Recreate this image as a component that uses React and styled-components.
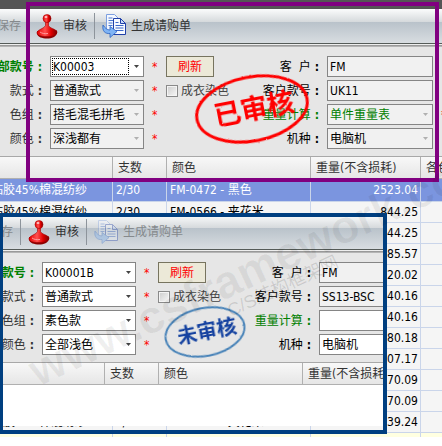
import React, { useId } from "react"
import styled, { createGlobalStyle } from 'styled-components';

const GlobalStyle = createGlobalStyle`
  body {
    margin: 0;
    background-color: #fff;
    font-family: "DejaVu Sans Condensed", "Noto Sans CJK SC", sans-serif;
    font-size: 12px;
    line-height: 20px;
    color: #000;
  }
`;

const Desktop = styled.main`
  position: relative;
  overflow: hidden;
  min-height: 446px;
  box-sizing: border-box;
`;

const TitleStrip = styled.div`
  height: 9px;
  background-color: #555;
`;

const Highlight = styled.div`
  position: absolute;
  top: 2px;
  left: 26px;
  width: 405px;
  height: 172px;
  border: 4px solid #800080;
  pointer-events: none;
`;

const FloatingWindow = styled.section`
  position: absolute;
  top: 213px;
  left: 0;
  width: 380px;
  padding-bottom: 4px;
  overflow: hidden;
  border: 4px solid #003f80;
  border-left-width: 3px;
`;

const Screen = styled.div`
  margin-left: ${props => props.$left}px;
  margin-top: ${props => props.$top || 0}px;
  min-width: 467px;
`;

const Toolbar = styled.div`
  display: flex;
  align-items: center;
  height: 34px;
  padding-left: 9px;
  background: linear-gradient(#fbfcfc 0, #d5d9dc 13px, #b9c2ca 13px, #d8dde1 34px);
`;

const ToolbarEdge = styled.div`
  height: 1px;
  border-top: 1px solid #555b58;
  border-bottom: 1px solid #999;
  background-color: #eee;
  margin-bottom: 1px;
  box-shadow: 0 2px 0 #b4b4b4;
`;

const ToolButton = styled.button`
  display: flex;
  align-items: center;
  gap: 5px;
  padding: 0;
  border: 0;
  background: none;
  font: inherit;
  color: #333;

  &:disabled {
    color: #85898c;
  }

  &:disabled svg {
    opacity: 0.35;
  }
`;

const Separator = styled.span`
  width: 1px;
  height: 26px;
  margin: 0 7px;
  background-color: #8d949b;
`;

const Form = styled.form`
  position: relative;
  display: grid;
  grid-template-columns: 62px 94px 22px 74px 87px 106px 22px;
  grid-auto-rows: 21px;
  row-gap: 3px;
  align-items: center;
  padding: 9px 0 7px;
  background-color: #e6e6e6;
`;

const Label = styled.label`
  padding-right: 8px;
  text-align: right;
  white-space: pre;
  color: ${props => props.$color || '#333'};
  font-weight: ${props => (props.$strong ? 700 : 400)};

  &::after {
    content: ":";
    margin-left: 4px;
    font-weight: 700;
  }
`;

const Required = styled.span`
  padding-left: 8px;
  color: #f00;
`;

const fieldColor = props => props.$color || '#000';

const TextField = styled.input`
  box-sizing: border-box;
  width: 100%;
  height: 21px;
  padding: 0 2px;
  border: 1px solid #858585;
  border-radius: 0;
  background-color: #f1f1f1;
  font: inherit;
  color: #000;
`;

const Combo = styled.div`
  position: relative;
  height: 21px;

  svg {
    position: absolute;
    top: 9px;
    right: 5px;
    pointer-events: none;
    fill: ${props => (props.$off ? '#b0b0b0' : '#444')};
  }
`;

const Select = styled.select`
  appearance: none;
  box-sizing: border-box;
  width: 100%;
  height: 21px;
  padding: 0 2px;
  border: 1px solid #858585;
  border-radius: 0;
  background-color: #fff;
  font: inherit;
  color: ${fieldColor};

  &:disabled {
    opacity: 1;
    background-color: #f1f1f1;
    color: ${fieldColor};
  }
`;

const FocusRect = styled.span`
  position: absolute;
  top: 2px;
  right: 15px;
  bottom: 2px;
  left: 2px;
  border: 1px dotted #000;
  pointer-events: none;
`;

const RefreshButton = styled.button`
  width: 48px;
  height: 21px;
  padding: 2px 0 0;
  border: 1px solid #77745f;
  background-color: #ece9d8;
  font: inherit;
  line-height: 17px;
  color: #f00;
`;

const CheckLabel = styled.label`
  display: flex;
  align-items: center;
  gap: 3px;
  white-space: nowrap;
  color: #444;
`;

const Checkbox = styled.input`
  appearance: none;
  box-sizing: border-box;
  width: 12px;
  height: 12px;
  margin: 0;
  border: 1px solid #8a8a8a;
  background: linear-gradient(135deg, #ccc, #f8f8f8);
  box-shadow: inset 0 0 0 1px #f4f4f4;
`;

const Blank = styled.span``;

const Seal = styled.svg`
  position: absolute;
  left: ${props => props.$x}px;
  top: ${props => props.$y}px;
  overflow: visible;
  pointer-events: none;
`;

const Table = styled.table`
  width: 100%;
  min-width: 467px;
  table-layout: fixed;
  border-collapse: separate;
  border-spacing: 0;
  border-top: 1px solid #a8a8a8;
`;

const HeadCell = styled.th`
  box-sizing: border-box;
  height: 22px;
  padding: 1px 0 0 5px;
  border-right: 1px solid #b0b0b0;
  border-bottom: 1px solid #b0b0b0;
  background: linear-gradient(#f8f8f8, #e6e6e6);
  font-weight: 400;
  text-align: left;
  white-space: nowrap;
  overflow: hidden;
  color: #333;
`;

const Row = styled.tr`
  height: ${props => (props.$selected ? 23 : 21)}px;
  background-color: ${props => (props.$selected ? '#7b95df' : '#f5f5f5')};
  color: ${props => (props.$selected ? '#fff' : '#000')};
`;

const Cell = styled.td`
  box-sizing: border-box;
  padding: 0 2px 0 3px;
  border-right: 1px solid #cad5ea;
  border-bottom: 1px solid #cad5ea;
  text-align: ${props => (props.$number ? 'right' : 'left')};
  white-space: nowrap;
  overflow: hidden;
`;

const NewRow = styled.tr`
  background-color: #ffffe1;

  td {
    height: 4px;
    padding: 0;
    border-right: 1px solid #cad5ea;
  }
`;

const EmptyBody = styled.div`
  height: 41px;
  background-color: #fff;
`;

const Watermark = styled.svg`
  position: absolute;
  top: 0;
  left: 0;
  pointer-events: none;
  fill: #000;
  fill-opacity: 0.06;
  font-family: "Liberation Sans", "Noto Sans CJK SC", sans-serif;
  font-weight: 700;
`;

const ApproveIcon = () => (
  <svg width="22" height="25" viewBox="0 0 22 25" aria-hidden="true">
    <defs>
      <linearGradient id="knob" x1="0" x2="1">
        <stop offset="0" stopColor="#e50000" />
        <stop offset="0.4" stopColor="#ff5050" />
        <stop offset="0.7" stopColor="#e00000" />
        <stop offset="1" stopColor="#780000" />
      </linearGradient>
    </defs>
    <path d="M1 17v3c1 3 5 4.500 10 4.500s9-2 10-5v-3z" fill="#8b0000" />
    <path d="M1 18.500C2 15 8 15 9.500 11.500V8h3v3.500c1 3 6.500 3 8.500 6 .5 3-4 5-10 5s-10-1-10-4z" fill="url(#knob)" stroke="#9d0000" strokeWidth="0.6" />
    <circle cx="11" cy="4.500" r="4" fill="url(#knob)" stroke="#a80000" strokeWidth="0.6" />
    <ellipse cx="10" cy="3" rx="1.500" ry="1" fill="#ffc4c4" />
    <path d="M4 18c2 1.500 5 2 8 1.500" fill="none" stroke="#ff9b9b" strokeWidth="1" />
  </svg>
);

const GenerateIcon = () => (
  <svg width="24" height="24" viewBox="0 0 24 24" aria-hidden="true">
    <path d="M4.500.5h8l4 4v12h-12z" fill="#f4f8ff" stroke="#7d9fe0" />
    <path d="M6.500 4h4M6.500 6.500h5M6.500 9h4M6.500 11.500h4" stroke="#4a78d0" />
    <path d="M11.500 4.500h7l5 5v11h-12z" fill="#f7faff" stroke="#1f3fa8" />
    <path d="M18.500 4.500v5h5z" fill="#c9dcfa" stroke="#1f3fa8" />
    <path d="M13.500 8.500h3M13.500 11.500h8M13.500 14h8M13.500 16.500h8" stroke="#3c68c8" />
    <path d="M1 11c-1 6 2 9 7 8.500V23.500l7-6-7-5V16C5 16 3 14 1 11z" fill="#7fb4f5" stroke="#2b62c0" strokeWidth="0.8" />
  </svg>
);

const ReviewSeal = ({ x, y, text, ink, ring, rx, ry, size, width }) => {
  const id = useId();
  return (
    <Seal $x={x} $y={y} width="1" height="1">
      <defs>
        <filter id={id} x="-20%" y="-20%" width="140%" height="140%">
          <feTurbulence type="fractalNoise" baseFrequency="0.5" numOctaves="2" result="noise" />
          <feDisplacementMap in="SourceGraphic" in2="noise" scale="2" xChannelSelector="R" yChannelSelector="G" />
        </filter>
      </defs>
      <g transform="rotate(-11)" filter={`url(#${id})`}>
        <ellipse rx={rx} ry={ry} fill="none" stroke={ring} strokeWidth={width} />
        <text x="2" y={size * 0.37} textAnchor="middle" fontSize={size} fontWeight="700" fill={ink}>
          {text}
        </text>
      </g>
    </Seal>
  );
};

const SelectField = ({ id, value, off, color, focused }) => (
  <Combo $off={off}>
    <Select id={id} defaultValue={value} disabled={off} $color={color}>
      <option value={value}>{value}</option>
    </Select>
    {focused && <FocusRect />}
    <svg width="5" height="3" viewBox="0 0 5 3" aria-hidden="true">
      <path d="M0 0h5L2.500 3z" />
    </svg>
  </Combo>
);

const Tools = ({ generateOff }) => (
  <>
    <Toolbar>
      <ToolButton disabled>保存</ToolButton>
      <Separator />
      <ToolButton><ApproveIcon />审核</ToolButton>
      <Separator />
      <ToolButton disabled={generateOff}><GenerateIcon />生成请购单</ToolButton>
    </Toolbar>
    <ToolbarEdge />
  </>
);

const StyleForm = ({ data, locked, children }) => {
  const id = useId();
  return (
    <Form onSubmit={e => e.preventDefault()}>
      <Label htmlFor={`${id}no`} $color="#008000" $strong>部款号</Label>
      <SelectField id={`${id}no`} value={data.no} focused={locked} />
      <Required>*</Required>
      <RefreshButton type="button">刷新</RefreshButton>
      <Label htmlFor={`${id}client`} $color="#000">{'客  户'}</Label>
      <TextField id={`${id}client`} defaultValue={data.client} readOnly />
      <Blank />

      <Label htmlFor={`${id}style`}>款式</Label>
      <SelectField id={`${id}style`} value={data.style} off={locked} />
      <Required>*</Required>
      <CheckLabel><Checkbox type="checkbox" />成衣染色</CheckLabel>
      <Label htmlFor={`${id}ref`} $color="#000">客户款号</Label>
      <TextField id={`${id}ref`} defaultValue={data.clientNo} readOnly />
      <Blank />

      <Label htmlFor={`${id}group`}>色组</Label>
      <SelectField id={`${id}group`} value={data.group} off={locked} />
      <Required>*</Required>
      <Blank />
      <Label htmlFor={`${id}weight`} $color="#008000">重量计算</Label>
      <SelectField id={`${id}weight`} value={data.weight} off={locked} color="#008000" />
      <Required>*</Required>

      <Label htmlFor={`${id}color`}>颜色</Label>
      <SelectField id={`${id}color`} value={data.color} off={locked} />
      <Required>*</Required>
      <Blank />
      <Label htmlFor={`${id}machine`} $color="#000">机种</Label>
      <SelectField id={`${id}machine`} value={data.machine} off={locked} />
      <Blank />
      {children}
    </Form>
  );
};

const YarnTable = ({ rows }) => (
  <Table>
    <colgroup>
      <col style={{ width: 125 }} />
      <col style={{ width: 54 }} />
      <col style={{ width: 144 }} />
      <col style={{ width: 110 }} />
      <col />
    </colgroup>
    <thead>
      <tr>
        <HeadCell />
        <HeadCell>支数</HeadCell>
        <HeadCell>颜色</HeadCell>
        <HeadCell>重量(不含损耗)</HeadCell>
        <HeadCell>各色</HeadCell>
      </tr>
    </thead>
    {rows && (
      <tbody>
        {rows.map(([color, weight], i) => (
          <Row key={i} $selected={i === 0}>
            <Cell>粘胶45%棉混纺纱</Cell>
            <Cell>2/30</Cell>
            <Cell>{color}</Cell>
            <Cell $number>{weight}</Cell>
            <Cell />
          </Row>
        ))}
        <NewRow><td /><td /><td /><td /><td /></NewRow>
      </tbody>
    )}
  </Table>
);

const approved = {
  no: 'K00003',
  style: '普通款式',
  group: '搭毛混毛拼毛',
  color: '深浅都有',
  client: 'FM',
  clientNo: 'UK11',
  weight: '单件重量表',
  machine: '电脑机',
};

const pending = {
  no: 'K00001B',
  style: '普通款式',
  group: '素色款',
  color: '全部浅色',
  client: 'FM',
  clientNo: 'SS13-BSC',
  weight: '',
  machine: '电脑机',
};

const yarns = [
  ['FM-0472 - 黑色', '2523.04'],
  ['FM-0566 - 夹花米', '844.25'],
  ['', '844.25'],
  ['', '85.57'],
  ['', '20.02'],
  ['', '40.16'],
  ['', '40.16'],
  ['', '80.18'],
  ['', '07.17'],
  ['', '70.09'],
  ['', '70.09'],
  ['FM-0566 - 夹花米', '39.24'],
];

const App = () => (
  <Desktop>
    <GlobalStyle />
    <TitleStrip />
    <Screen $left={-12}>
      <Tools />
      <StyleForm data={approved} locked>
        <ReviewSeal x={264} y={62} text="已审核" ink="#f00" ring="#f00" rx={56} ry={32} size={27} width={3} />
      </StyleForm>
      <YarnTable rows={yarns} />
    </Screen>
    <Highlight />

    <FloatingWindow>
      <Screen $left={-23} $top={-2}>
        <Tools generateOff />
        <StyleForm data={pending}>
          <ReviewSeal x={225} y={79} text="未审核" ink="#1443a0" ring="#4682b8" rx={40} ry={24} size={20} width={2} />
        </StyleForm>
        <YarnTable />
        <EmptyBody />
      </Screen>
    </FloatingWindow>

    <Watermark width="100%" height="446">
      <text transform="translate(38 387) rotate(-25)" fontSize="46">www.csframework.com</text>
      <text transform="translate(231 317) rotate(-25)" fontSize="18" fontWeight="400" fillOpacity="0.12">C/S结构框架网</text>
    </Watermark>
  </Desktop>
)

export default App;
